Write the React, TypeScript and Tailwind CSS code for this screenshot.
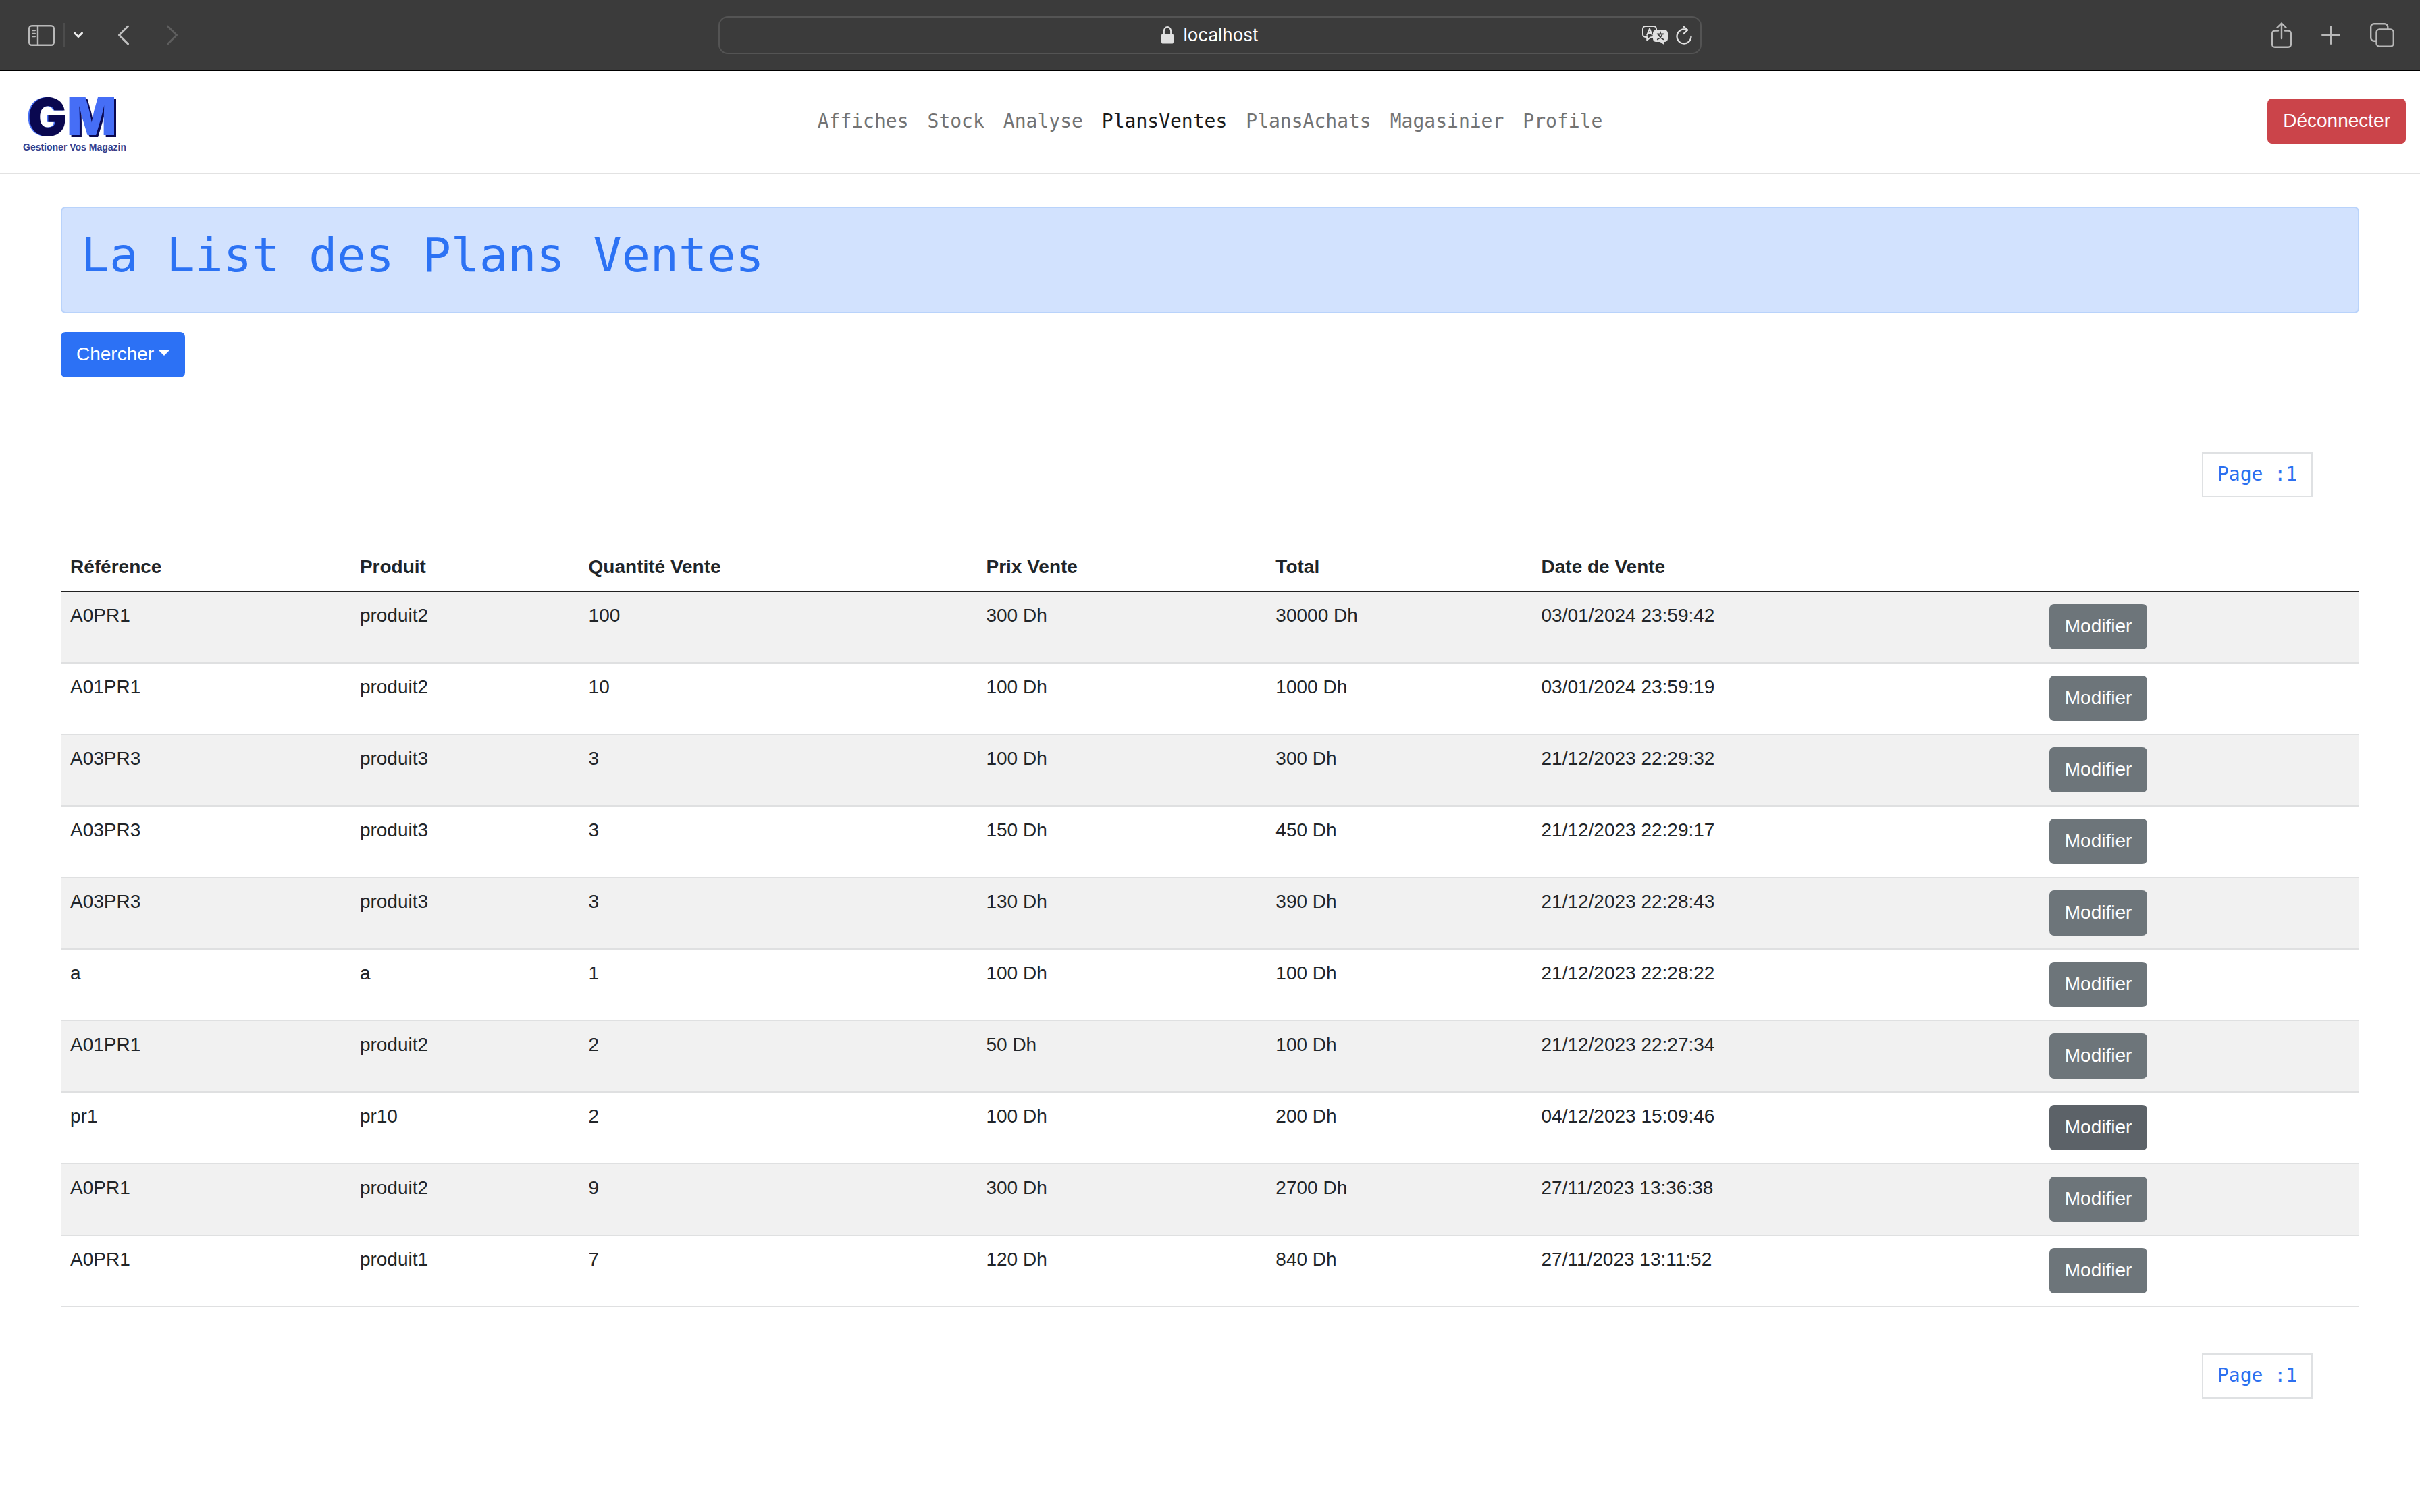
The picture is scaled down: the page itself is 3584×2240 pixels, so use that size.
import React from "react";

const BUTTON =
  "inline-flex items-center rounded-[7px] px-[23px] pt-3 pb-[13px] text-[28px] leading-[42px] text-white";

const NAV_LINKS = ["Affiches", "Stock", "Analyse", "PlansVentes", "PlansAchats", "Magasinier", "Profile"];
const ACTIVE_LINK = "PlansVentes";
const ACTIVE_ROW = 7;

const HEADINGS = ["Référence", "Produit", "Quantité Vente", "Prix Vente", "Total", "Date de Vente"];

const SALES: string[][] = [
  ["A0PR1", "produit2", "100", "300 Dh", "30000 Dh", "03/01/2024 23:59:42"],
  ["A01PR1", "produit2", "10", "100 Dh", "1000 Dh", "03/01/2024 23:59:19"],
  ["A03PR3", "produit3", "3", "100 Dh", "300 Dh", "21/12/2023 22:29:32"],
  ["A03PR3", "produit3", "3", "150 Dh", "450 Dh", "21/12/2023 22:29:17"],
  ["A03PR3", "produit3", "3", "130 Dh", "390 Dh", "21/12/2023 22:28:43"],
  ["a", "a", "1", "100 Dh", "100 Dh", "21/12/2023 22:28:22"],
  ["A01PR1", "produit2", "2", "50 Dh", "100 Dh", "21/12/2023 22:27:34"],
  ["pr1", "pr10", "2", "100 Dh", "200 Dh", "04/12/2023 15:09:46"],
  ["A0PR1", "produit2", "9", "300 Dh", "2700 Dh", "27/11/2023 13:36:38"],
  ["A0PR1", "produit1", "7", "120 Dh", "840 Dh", "27/11/2023 13:11:52"],
];

function BrowserBar() {
  return (
    <div className="flex h-[105px] items-start border-b border-black bg-[#3b3b3b] pt-6 text-[#b8b8b8]">
      <div className="flex h-14 flex-1 items-center">
        <button aria-label="Barre latérale" className="ml-[42px]">
          <svg width="39" height="31" viewBox="0 0 39 31" fill="none" stroke="currentColor" strokeWidth="2.4" strokeLinecap="round">
            <rect x="1.2" y="1.2" width="36.6" height="28.6" rx="4" />
            <path d="M14 1.5v28" />
            <path d="M6 8.2h4M6 12.7h4M6 17.2h4" strokeWidth="2" />
          </svg>
        </button>
        <span className="ml-[13px] h-9 w-0.5 bg-[#4c4c4c]" />
        <button aria-label="Groupes d’onglets" className="ml-3 text-[#ececec]">
          <svg width="16" height="12" viewBox="0 0 16 12" fill="none" stroke="currentColor" strokeWidth="3" strokeLinecap="round" strokeLinejoin="round">
            <path d="M2.5 3 8 8.5 13.5 3" />
          </svg>
        </button>
        <button aria-label="Précédent" className="ml-[50px] text-[#c0c0c0]">
          <svg width="18" height="30" viewBox="0 0 18 30" fill="none" stroke="currentColor" strokeWidth="3" strokeLinecap="round" strokeLinejoin="round">
            <path d="M15.5 2 2.5 15l13 13" />
          </svg>
        </button>
        <button aria-label="Suivant" disabled className="ml-[54px] text-[#5e5e5e]">
          <svg width="18" height="30" viewBox="0 0 18 30" fill="none" stroke="currentColor" strokeWidth="3" strokeLinecap="round" strokeLinejoin="round">
            <path d="M2.5 2l13 13-13 13" />
          </svg>
        </button>
      </div>

      <div className="flex h-14 w-[40.6%] items-center rounded-[14px] border-2 border-[#545454] text-[#e0e0e0]">
        <div className="flex-1" />
        <div className="flex items-center gap-3.5">
          <svg width="18" height="26" viewBox="0 0 18 26" fill="none">
            <path d="M3.8 12V7a5.2 5.8 0 0 1 10.400 0V12" stroke="currentColor" strokeWidth="2.2" />
            <rect x="0" y="11" width="18" height="14.500" rx="2.6" fill="currentColor" />
          </svg>
          <input
            type="text"
            aria-label="Adresse"
            defaultValue="localhost"
            className="field-sizing-content bg-transparent font-['Inter',sans-serif] text-[26px] leading-8 text-white outline-none"
          />
        </div>
        <div className="flex flex-1 items-center justify-end gap-3">
          <button aria-label="Traduire">
            <svg width="38" height="29" viewBox="0 0 38 29" fill="none" strokeLinecap="round" strokeLinejoin="round">
              <path
                d="M15.5 17 12 17.5 7.2 21.5V17H5a4 4 0 0 1-4-4V5a4 4 0 0 1 4-4h12a4 4 0 0 1 4 4v2"
                stroke="currentColor"
                strokeWidth="2"
              />
              <path d="M7.2 13.8 11 4.6l3.8 9.2M8.4 11h5.2" stroke="currentColor" strokeWidth="2" />
              <path
                d="M20.500 6.500h13a4.500 4.500 0 0 1 4.500 4.500v8.500a4.500 4.500 0 0 1-4.500 4.500H33v4.500L26.500 24h-6a4.500 4.500 0 0 1-4.500-4.500V11a4.500 4.500 0 0 1 4.500-4.500z"
                fill="currentColor"
              />
              <path d="M27 9.500v2M22.500 12.300h9M29.800 12.600c-1 3.400-3.600 6.200-7 7.700M24.200 12.600c1 3.400 3.600 6.200 7 7.700" stroke="#3b3b3b" strokeWidth="1.800" />
            </svg>
          </button>
          <button aria-label="Actualiser" className="mr-3">
            <svg width="24" height="28" viewBox="0 0 24 28" fill="none" stroke="currentColor" strokeWidth="2.300" strokeLinecap="round" strokeLinejoin="round">
              <path d="M22.500 16A10.500 10.500 0 1 1 15.500 6.100L17 6.500" />
              <path d="M11.500 1.500 17 6.500 11.500 12" />
            </svg>
          </button>
        </div>
      </div>

      <div className="flex h-14 flex-1 items-center justify-end">
        <button aria-label="Partager">
          <svg width="30" height="38" viewBox="0 0 30 38" fill="none" stroke="currentColor" strokeWidth="2.400" strokeLinecap="round" strokeLinejoin="round">
            <path d="M10 12.500H5a3.800 3.800 0 0 0-3.800 3.800V33A3.800 3.800 0 0 0 5 36.800h20a3.800 3.800 0 0 0 3.800-3.800V16.300A3.800 3.800 0 0 0 25 12.500h-5" />
            <path d="M15 24V1.500M8.500 7.800 15 1.500l6.500 6.300" />
          </svg>
        </button>
        <button aria-label="Nouvel onglet" className="ml-11">
          <svg width="28" height="28" viewBox="0 0 28 28" fill="none" stroke="currentColor" strokeWidth="2.800" strokeLinecap="round">
            <path d="M14 1.500v25M1.500 14h25" />
          </svg>
        </button>
        <button aria-label="Vue d’ensemble des onglets" className="mr-[38px] ml-11">
          <svg width="36" height="36" viewBox="0 0 36 36" fill="none" stroke="currentColor" strokeWidth="2.400">
            <rect x="9.500" y="9.500" width="25.300" height="25.300" rx="4.500" />
            <path d="M9.500 26.800H6a4.800 4.800 0 0 1-4.800-4.800V6A4.800 4.800 0 0 1 6 1.200h15.500A4.800 4.800 0 0 1 26.300 6v3.500" />
          </svg>
        </button>
      </div>
    </div>
  );
}

function Logo() {
  return (
    <svg
      width="160"
      height="97"
      viewBox="0 0 160 97"
      aria-label="GM Gestioner Vos Magazin"
      className="overflow-visible font-['Inter',sans-serif] font-black"
    >
      <text x="11" y="70" fontSize="77" fill="#0a0850" className="drop-shadow-[-2px_0px_0px_#4a72f6]">
        G
      </text>
      <text x="69" y="69" fontSize="77" fill="#466ef6" className="drop-shadow-[3px_3px_0px_#0a0850]">
        M
      </text>
      <text x="4" y="92" fontSize="14" fill="#34408c" className="font-['Liberation_Sans',Arial,sans-serif] font-bold">
        Gestioner Vos Magazin
      </text>
    </svg>
  );
}

function SiteHeader() {
  return (
    <header className="flex items-center border-b-2 border-[#e2e2e2] pt-[26px] pb-7">
      <div className="flex flex-1">
        <a href="#accueil" className="ml-[30px]">
          <Logo />
        </a>
      </div>
      <nav className="flex gap-7 font-['DejaVu_Sans_Mono',monospace] text-[28px] leading-[42px]">
        {NAV_LINKS.map((link) => (
          <a key={link} href={"#" + link} className={link === ACTIVE_LINK ? "text-[#1a1a1a]" : "text-[#737373]"}>
            {link}
          </a>
        ))}
      </nav>
      <div className="flex flex-1 justify-end">
        <button className={BUTTON + " mr-[21px] bg-[#cb444a]"}>Déconnecter</button>
      </div>
    </header>
  );
}

function PageLink() {
  return (
    <div className="flex justify-end pr-[69px]">
      <a
        href="#page-1"
        className="border-2 border-[#dfe1e3] px-[21px] pt-2.5 pb-[11px] font-['DejaVu_Sans_Mono',monospace] text-[28px] leading-[42px] text-[#2c70f0]"
      >
        Page :1
      </a>
    </div>
  );
}

function SalesTable() {
  return (
    <table className="my-[68px] w-full table-fixed text-left">
      <colgroup>
        <col className="w-[12.6%]" />
        <col className="w-[9.95%]" />
        <col className="w-[17.3%]" />
        <col className="w-[12.6%]" />
        <col className="w-[11.55%]" />
        <col className="w-[22.1%]" />
        <col />
      </colgroup>
      <thead>
        <tr className="border-b-2 border-[#212121]">
          {HEADINGS.map((heading) => (
            <th key={heading} scope="col" className="p-3.5 font-bold">
              {heading}
            </th>
          ))}
          <td />
        </tr>
      </thead>
      <tbody>
        {SALES.map((cells, row) => (
          <tr key={row} className="border-b-2 border-[#dfe0e1] align-top odd:bg-[#f1f1f1]">
            {cells.map((cell, column) => (
              <td key={column} className="p-3.5">
                {cell}
              </td>
            ))}
            <td className="px-3.5 pt-[18px] pb-[19px]">
              <button className={BUTTON + " align-top " + (row === ACTIVE_ROW ? "bg-[#5c6268]" : "bg-[#6d757a]")}>Modifier</button>
            </td>
          </tr>
        ))}
      </tbody>
    </table>
  );
}

export default function App() {
  return (
    <div className="min-h-screen bg-white font-['Liberation_Sans',Arial,sans-serif] text-[28px] leading-[42px] text-[#212529]">
      <BrowserBar />
      <SiteHeader />
      <main className="px-[90px] pt-12">
        <div className="rounded-[7px] border-2 border-[#b9d3fb] bg-[#d2e2fe] px-7 pt-7 pb-[42px]">
          <h1 className="font-['DejaVu_Sans_Mono',monospace] text-[70px] leading-[84px] text-[#2c72f4]">La List des Plans Ventes</h1>
        </div>
        <div className="mt-7 mb-[111px] flex">
          <button className={BUTTON + " gap-[7px] bg-[#2c71f5]"} aria-haspopup="menu">
            Chercher
            <svg width="16" height="8" viewBox="0 0 16 8" fill="currentColor" className="mb-1">
              <path d="M0 0h16L8 8z" />
            </svg>
          </button>
        </div>
        <PageLink />
        <SalesTable />
        <PageLink />
      </main>
    </div>
  );
}
